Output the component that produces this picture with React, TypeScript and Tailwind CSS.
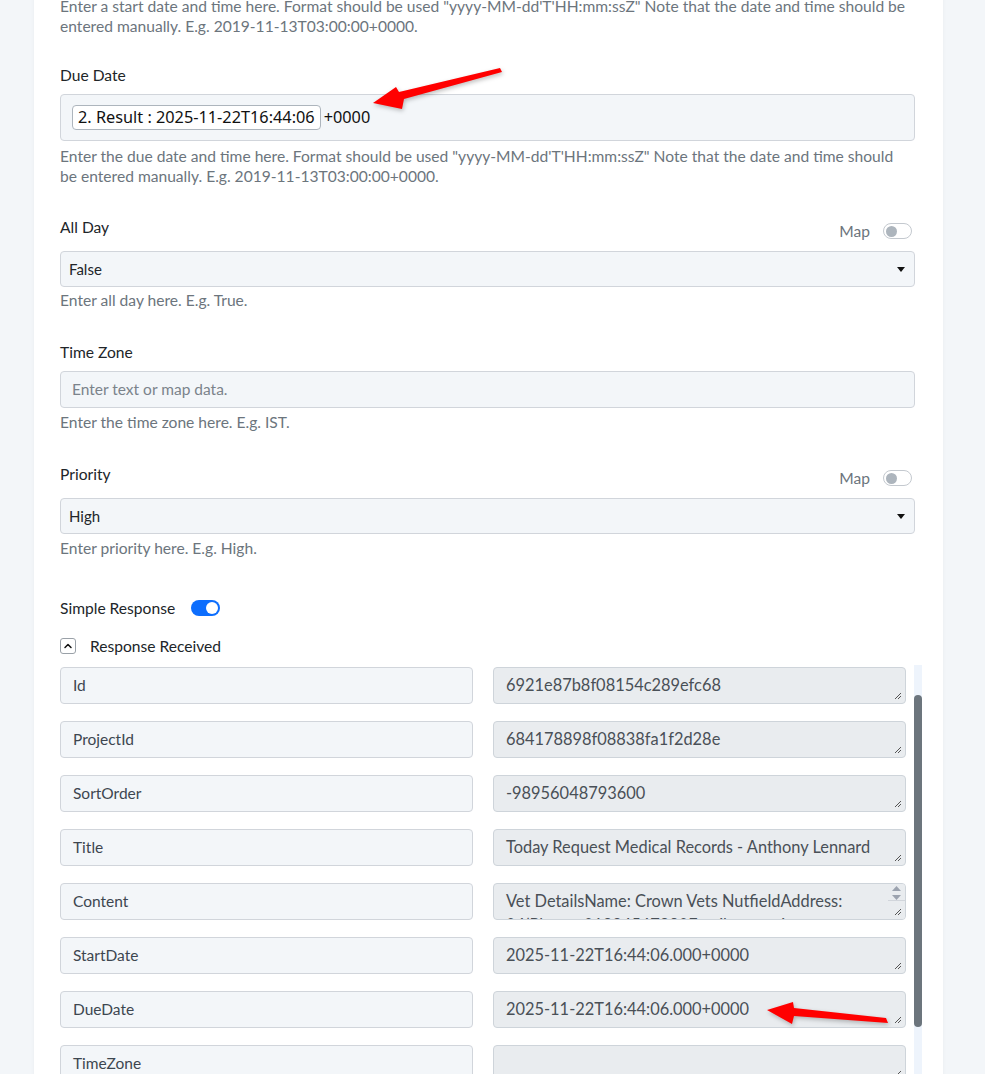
import { ChevronUp } from "lucide-react"

function Toggle({ on }: { on?: boolean }) {
  return on ? (
    <span className="inline-flex h-[16px] w-[29px] items-center justify-end rounded-full bg-[#0d6efd] px-[2px]">
      <span className="h-[12px] w-[12px] rounded-full bg-white" />
    </span>
  ) : (
    <span className="inline-flex h-[16px] w-[29px] items-center rounded-full border border-[#c4c9cf] bg-white px-[2px]">
      <span className="h-[11px] w-[11px] rounded-full bg-[#adb5bd]" />
    </span>
  )
}

function Help({ children }: { children: React.ReactNode }) {
  return <p className="text-[15.6px] leading-5 text-[#6c757d]">{children}</p>
}

function Label({ children, map }: { children: React.ReactNode; map?: boolean }) {
  if (!map) return <div className="mb-[9px] text-[15.6px] leading-5 text-[#212529]">{children}</div>
  return (
    <div className="mb-[10px] flex justify-between">
      <span className="text-[15.6px] leading-5 text-[#212529]">{children}</span>
      <span className="flex items-center gap-[13px] pt-[4px] pr-[3px]">
        <span className="text-[15.6px] leading-5 text-[#6c757d]">Map</span>
        <Toggle />
      </span>
    </div>
  )
}

function Select({ value }: { value: string }) {
  return (
    <div className="flex h-[36px] items-center justify-between rounded border border-[#d1d5db] bg-[#f3f6f9] pl-[8px] pr-[9px] text-[15px] text-[#212529]">
      <span>{value}</span>
      <svg width="8" height="5" viewBox="0 0 8 5">
        <path d="M0 0h8L4 5z" fill="#111" />
      </svg>
    </div>
  )
}

function Resize() {
  return (
    <svg className="absolute bottom-[3px] right-[3px]" width="8" height="8" viewBox="0 0 8 8">
      <path d="M7 1L1 7M7 4L4 7" stroke="#555" strokeWidth="1" />
    </svg>
  )
}

const rows: [string, string][] = [
  ["Id", "6921e87b8f08154c289efc68"],
  ["ProjectId", "684178898f08838fa1f2d28e"],
  ["SortOrder", "-98956048793600"],
  ["Title", "Today Request Medical Records - Anthony Lennard"],
  ["Content", "Vet DetailsName: Crown Vets NutfieldAddress:"],
  ["StartDate", "2025-11-22T16:44:06.000+0000"],
  ["DueDate", "2025-11-22T16:44:06.000+0000"],
  ["TimeZone", ""],
]

export default function App() {
  return (
    <div className="relative h-[1074px] overflow-hidden bg-[#f3f6f9] font-['Lato',sans-serif]">
      <div className="ml-[34px] h-[1200px] w-[909px] bg-white pl-[26px] pr-[28px] shadow-[0_0_4px_rgba(0,0,0,0.04)]">
        <div className="mt-[-4px]">
          <Help>
            Enter a start date and time here. Format should be used "yyyy-MM-dd'T'HH:mm:ssZ" Note that the date and time should be
            entered manually. E.g. 2019-11-13T03:00:00+0000.
          </Help>
        </div>

        <div className="mt-[29px]">
          <Label>Due Date</Label>
          <div className="flex h-[47px] items-center rounded border border-[#d1d5db] bg-[#f3f6f9] pl-[11px] font-['Noto_Sans',sans-serif] text-[16.3px] text-[#111]">
            <span className="rounded border border-[#adb5bd] bg-white px-[5px] leading-[23px]">
              2. Result : 2025-11-22T16:44:06
            </span>
            <span className="ml-[3px]">+0000</span>
          </div>
          <div className="mt-[5px]">
            <Help>
              Enter the due date and time here. Format should be used "yyyy-MM-dd'T'HH:mm:ssZ" Note that the date and time should
              <br />
              be entered manually. E.g. 2019-11-13T03:00:00+0000.
            </Help>
          </div>
        </div>

        <div className="mt-[31px]">
          <Label map>All Day</Label>
          <Select value="False" />
          <div className="mt-[3px]">
            <Help>Enter all day here. E.g. True.</Help>
          </div>
        </div>

        <div className="mt-[32px]">
          <Label>Time Zone</Label>
          <div className="flex h-[37px] items-center rounded border border-[#d1d5db] bg-[#f3f6f9] pl-[11px] text-[15.5px] text-[#7b838b]">
            Enter text or map data.
          </div>
          <div className="mt-[4px]">
            <Help>Enter the time zone here. E.g. IST.</Help>
          </div>
        </div>

        <div className="mt-[32px]">
          <Label map>Priority</Label>
          <Select value="High" />
          <div className="mt-[4px]">
            <Help>Enter priority here. E.g. High.</Help>
          </div>
        </div>

        <div className="mt-[40px] flex items-center gap-[16px]">
          <span className="text-[15.6px] leading-5 text-[#212529]">Simple Response</span>
          <Toggle on />
        </div>

        <div className="mt-[18px] flex items-center gap-[14px]">
          <span className="flex h-[16px] w-[16px] items-center justify-center rounded-[3px] border border-[#9aa1a8]">
            <ChevronUp size={12} strokeWidth={3} color="#111" />
          </span>
          <span className="text-[15.6px] leading-5 text-[#212529]">Response Received</span>
        </div>

        <div className="mt-[9px] flex">
          <div className="flex w-[846px] shrink-0 flex-col gap-[17px] pt-[2px]">
            {rows.map(([k, v]) => (
              <div key={k} className="grid grid-cols-[413px_413px] gap-[20px]">
                <div className="flex h-[37px] items-center rounded border border-[#d1d5db] bg-[#f3f6f9] pl-[12px] text-[15.5px] text-[#3d4650]">
                  {k}
                </div>
                {k === "Content" ? (
                  <div className="relative h-[37px] overflow-hidden rounded border border-[#ced4da] bg-[#e9ecef] pl-[12px] pt-[5px] text-[16.4px] leading-6 text-[#495057]">
                    <div>{v}</div>
                    <div>04(Phone: 01234567890Email: reception@crownvets</div>
                    <div className="absolute right-0 top-0 h-full w-[17px] bg-[#e9ecef]">
                      <svg className="ml-[4px] mt-[2px]" width="9" height="14" viewBox="0 0 9 14">
                        <path d="M4.5 0L9 5H0z" fill="#9ca3af" />
                        <path d="M4.5 14L9 9H0z" fill="#9ca3af" />
                      </svg>
                      <div className="h-[1px] w-full bg-[#d1d5db]" />
                    </div>
                    <Resize />
                  </div>
                ) : (
                  <div className="relative h-[37px] overflow-hidden rounded border border-[#ced4da] bg-[#e9ecef] pl-[12px] pt-[7px] text-[16.4px] leading-5 text-[#495057]">
                    {v}
                    <Resize />
                  </div>
                )}
              </div>
            ))}
          </div>
          <div className="ml-[8px] w-[8px] shrink-0 bg-[#eef4fc]">
            <div className="mt-[30px] h-[332px] rounded-full bg-[#6c757d]" />
          </div>
        </div>
      </div>

      <svg className="pointer-events-none absolute left-0 top-0" width="985" height="1074" style={{ filter: "drop-shadow(1px 2px 2px rgba(0,0,0,0.25))" }}>
        <polygon points="373,103 396,87 399,92 500,68 502,72 404,99 402,109" fill="#ff0000" />
        <polygon points="767,1010 793,1002 794,1008 886,1018 888,1023 794,1016 792,1024" fill="#ff0000" />
      </svg>
    </div>
  )
}
